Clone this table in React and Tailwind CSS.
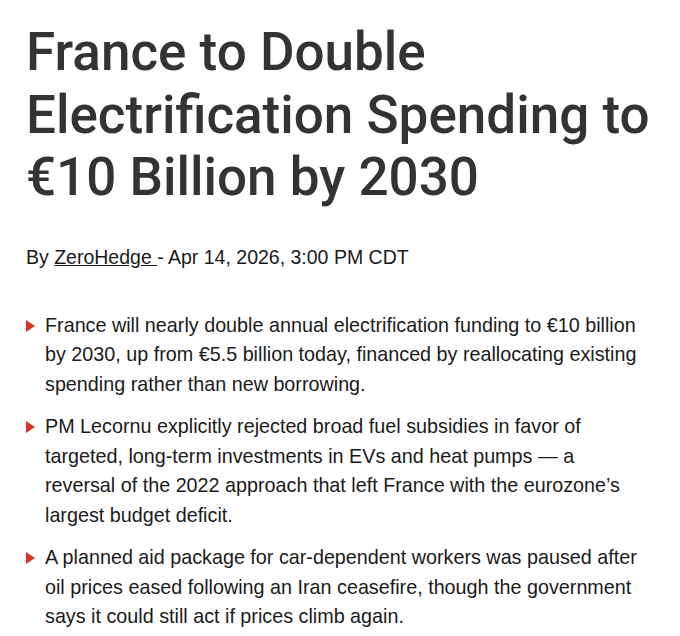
export default function App() {
  const points = [
    "France will nearly double annual electrification funding to €10 billion by 2030, up from €5.5 billion today, financed by reallocating existing spending rather than new borrowing.",
    "PM Lecornu explicitly rejected broad fuel subsidies in favor of targeted, long-term investments in EVs and heat pumps — a reversal of the 2022 approach that left France with the eurozone’s largest budget deficit.",
    "A planned aid package for car-dependent workers was paused after oil prices eased following an Iran ceasefire, though the government says it could still act if prices climb again.",
  ];

  return (
    <div className="min-h-screen bg-white pl-[26px] pr-[24px] pt-[21px]">
      <h1 className="font-['Roboto',sans-serif] text-[53px] leading-[62.5px] font-medium text-[#333333]">
        France to Double Electrification Spending to €10 Billion by 2030
      </h1>

      <p className="mt-[36px] font-['Liberation_Sans',Arial,sans-serif] text-[19.5px] leading-[24px] text-[#1a1a1a]">
        By <a className="underline">ZeroHedge </a>- Apr 14, 2026, 3:00 PM CDT
      </p>

      <ul className="mt-[42px] pr-[12px] font-['Liberation_Sans',Arial,sans-serif] text-[19.75px] leading-[29.5px] text-[#1a1a1a]">
        {points.map((t, i) => (
          <li key={i} className="flex mb-[13px]">
            <span className="w-[19px] shrink-0 pt-[9px]">
              <svg width="9" height="12" viewBox="0 0 9 12">
                <path d="M0 0 L9 6 L0 12 Z" fill="#d9362b" />
              </svg>
            </span>
            <span>{t}</span>
          </li>
        ))}
      </ul>
    </div>
  );
}
